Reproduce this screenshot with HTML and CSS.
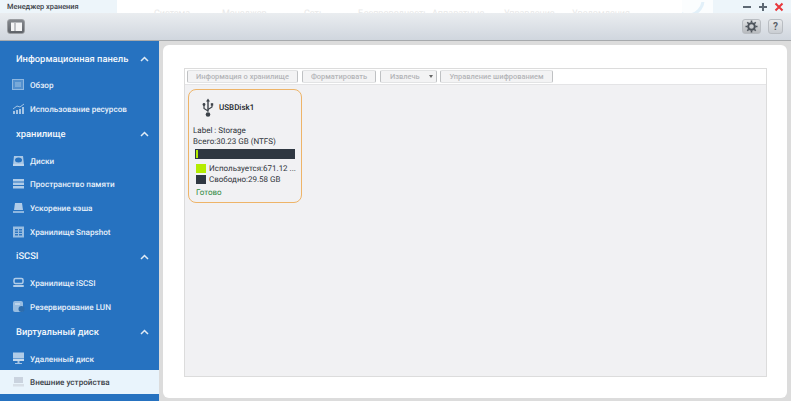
FILE: index.html
```html
<!DOCTYPE html>
<html lang="ru">
<head>
<meta charset="utf-8">
<title>Менеджер хранения</title>
<link rel="stylesheet" href="styles.css">
</head>
<body>
<div class="app">
  <header class="titlebar">
    <div class="title">Менеджер хранения</div>
    <div class="desk">
      <span class="l1">Система</span><span class="l2">Менеджер</span><span class="l3">Сеть</span><span class="l4">Беспроводность</span><span class="l5">Аппаратные</span><span class="l6">Управление</span><span class="l7">Уведомления</span>
    </div>
    <div class="ring"><svg width="31" height="13" viewBox="0 0 31 13"><circle cx="6" cy="-2" r="15" fill="none" stroke="#e2f0f9" stroke-width="3"/></svg></div>
    <div class="controls">
      <svg width="10" height="10" viewBox="0 0 10 10"><rect x="1" y="4" width="8" height="2" fill="#5d6873"/></svg>
      <svg width="10" height="10" viewBox="0 0 10 10"><path d="M1 4h3V1h2v3h3v2H6v3H4V6H1z" fill="#5d6873"/></svg>
      <svg width="10" height="10" viewBox="0 0 10 10"><path d="M1.5 1.5l7 7M8.5 1.500l-7 7" stroke="#e8383c" stroke-width="2"/></svg>
    </div>
  </header>
  <div class="toolbar">
    <button class="tb-toggle" type="button"><svg width="11" height="9" viewBox="0 0 11 9"><rect width="11" height="9" fill="#f4f5f6"/><rect width="11" height="1" fill="#b5b8bc"/><rect x="3.500" y="1" width="1" height="8" fill="#8a8e93"/></svg></button>
    <div class="tb-right">
      <button class="tb-btn gear" type="button"><svg width="13" height="13" viewBox="0 0 13 13"><circle cx="6.500" cy="6.500" r="3.300" fill="none" stroke="#4d535a" stroke-width="2"/><path d="M6.500 0.500v2M6.500 10.500v2M0.500 6.500h2M10.500 6.500h2M2.300 2.300l1.400 1.400M9.300 9.300l1.400 1.400M2.300 10.700l1.400-1.400M9.300 3.700l1.400-1.400" stroke="#4d535a" stroke-width="1.600"/></svg></button>
      <button class="tb-btn help" type="button">?</button>
    </div>
  </div>
  <div class="main">
    <nav class="sidebar">
      <div class="group-head"><span>Информационная панель</span><svg class="chev" width="9" height="6" viewBox="0 0 9 6"><path d="M1 5l3.500-3.500L8 5" fill="none" stroke="#dfeaf5" stroke-width="1.500"/></svg></div>
      <a class="item"><svg class="ico" width="14" height="12" viewBox="0 0 14 12"><rect x=".5" y=".5" width="11" height="10" fill="#5f98d2" stroke="#a9c9e8"/><rect x="3" y="3" width="6" height="5" fill="#8db7e0"/></svg><span>Обзор</span></a>
      <a class="item"><svg class="ico" width="14" height="12" viewBox="0 0 14 12"><path d="M1 11V8h2v3zM4 11V7h2v4zM7 11V6h2v5zM10 11V4h2v7z" fill="#c4d9ee"/><path d="M1 6l4-3 3 1 4-3" fill="none" stroke="#c4d9ee"/></svg><span>Использование ресурсов</span></a>

      <div class="group-head"><span>хранилище</span><svg class="chev" width="9" height="6" viewBox="0 0 9 6"><path d="M1 5l3.500-3.500L8 5" fill="none" stroke="#dfeaf5" stroke-width="1.500"/></svg></div>
      <a class="item"><svg class="ico" width="14" height="12" viewBox="0 0 14 12"><path d="M2 1h9l1 9H1z" fill="#c9ddf0"/><ellipse cx="6.500" cy="5" rx="3.500" ry="2.500" fill="#2672c0"/><rect x="1" y="9" width="11" height="2" fill="#e4eef8"/></svg><span>Диски</span></a>
      <a class="item"><svg class="ico" width="14" height="12" viewBox="0 0 14 12"><path d="M1 1h11v2.500H1zM1 4.500h11V7H1zM1 8h11v2.500H1z" fill="#d3e3f3"/></svg><span>Пространство памяти</span></a>
      <a class="item"><svg class="ico" width="14" height="12" viewBox="0 0 14 12"><path d="M3 1h7l1 7H2z" fill="#d3e3f3"/><rect x="1" y="9" width="11" height="2" fill="#a9c9e8"/></svg><span>Ускорение кэша</span></a>
      <a class="item"><svg class="ico" width="14" height="12" viewBox="0 0 14 12"><rect x="1" y="0.500" width="11" height="11" fill="#b5d0ea"/><path d="M3 3h3v1.500H3zM7 3h3v1.500H7zM3 5.500h3V7H3zM7 5.500h3V7H7zM3 8h3v1.500H3zM7 8h3v1.500H7z" fill="#2f77c2"/></svg><span>Хранилище Snapshot</span></a>

      <div class="group-head"><span>iSCSI</span><svg class="chev" width="9" height="6" viewBox="0 0 9 6"><path d="M1 5l3.500-3.500L8 5" fill="none" stroke="#dfeaf5" stroke-width="1.500"/></svg></div>
      <a class="item"><svg class="ico" width="14" height="12" viewBox="0 0 14 12"><rect x="2" y="1.500" width="9" height="5" rx="1.500" fill="none" stroke="#d3e3f3" stroke-width="1.500"/><rect x="1" y="8" width="11" height="2" rx="1" fill="#d3e3f3"/></svg><span>Хранилище iSCSI</span></a>
      <a class="item"><svg class="ico" width="14" height="14" viewBox="0 0 14 14"><rect x="1" y="1" width="10" height="11" rx="2" fill="#b5d0ea"/><circle cx="9.500" cy="9" r="3" fill="#2f6ba8"/><rect x="3" y="3" width="5" height="2" fill="#e4eef8"/></svg><span>Резервирование LUN</span></a>

      <div class="group-head"><span>Виртуальный диск</span><svg class="chev" width="9" height="6" viewBox="0 0 9 6"><path d="M1 5l3.500-3.500L8 5" fill="none" stroke="#dfeaf5" stroke-width="1.500"/></svg></div>
      <a class="item"><svg class="ico" width="14" height="13" viewBox="0 0 14 13"><rect x="1" y="0.500" width="11" height="6" fill="#d3e3f3"/><rect x="1" y="7" width="11" height="2" fill="#eef4fa"/><path d="M5.500 9h2v2h-2zM3 11h7v1H3z" fill="#c4d9ee"/></svg><span>Удаленный диск</span></a>
      <a class="item active"><svg class="ico" width="14" height="12" viewBox="0 0 14 12"><rect x="2" y="1" width="9" height="6" fill="#c3ccd8"/><rect x="1" y="8" width="11" height="2.500" fill="#d3dae3"/></svg><span>Внешние устройства</span></a>
    </nav>
    <section class="panel">
      <div class="box">
        <div class="actions">
          <button class="act a1" type="button">Информация о хранилище</button>
          <button class="act a2" type="button">Форматировать</button>
          <button class="act a3" type="button"><span>Извлечь</span><i class="caret"></i></button>
          <button class="act a4" type="button">Управление шифрованием</button>
        </div>
        <div class="content">
          <article class="card">
            <div class="card-head">
              <svg class="usb" width="12" height="20" viewBox="0 0 12 20"><path d="M6 0.500L8 3.500H6.700V13.500A1 1 0 0 1 5.300 13.500V3.500H4z" fill="#3c4249"/><path d="M6 13L2 10.500V7M6 11.500L10 9V7" fill="none" stroke="#3c4249" stroke-width="1.200"/><circle cx="2" cy="6.500" r="1.400" fill="#3c4249"/><rect x="8.800" y="5.200" width="2.400" height="2.400" fill="#3c4249"/><circle cx="6" cy="16.500" r="2.300" fill="#3c4249"/></svg>
              <strong>USBDisk1</strong>
            </div>
            <div class="line">Label : Storage</div>
            <div class="line">Всего:30.23 GB (NTFS)</div>
            <div class="bar"><div class="bar-used"></div></div>
            <div class="legend"><i class="sw lime"></i><span>Используется:671.12 ...</span></div>
            <div class="legend"><i class="sw dark"></i><span>Свободно:29.58 GB</span></div>
            <div class="status">Готово</div>
          </article>
        </div>
      </div>
    </section>
  </div>
</div>
</body>
</html>
```
FILE: styles.css
```css
* { box-sizing: border-box; }
html, body { margin: 0; padding: 0; }
body { width: 791px; height: 401px; overflow: hidden; font-family: Roboto, "Liberation Sans", sans-serif; color: #333; text-rendering: geometricPrecision; }
.app { width: 791px; height: 401px; display: flex; flex-direction: column; overflow: hidden; }

.titlebar { height: 13px; display: flex; background: #edf5fa; flex: none; overflow: hidden; }
.title { width: 117px; padding: 2px 0 0 7px; font-size: 7.400px; line-height: 10px; font-weight: 500; color: #3b4148; white-space: nowrap; }
.desk { width: 565px; background: #fff; display: flex; font-size: 9px; color: #e8e8e8; padding: 9px 0 0 37px; line-height: 10px; white-space: nowrap; }
.l1 { width: 68px; } .l2 { width: 82px; } .l3 { width: 54px; } .l4 { width: 74px; } .l5 { width: 72px; } .l6 { width: 68px; }
.ring { width: 31px; background: #fbfdfe; }
.controls { flex: 1; display: flex; gap: 6px; padding: 0 0 0 29px; align-items: center; }
.controls svg { flex: none; }

.toolbar { height: 28px; flex: none; display: flex; justify-content: space-between; align-items: center; padding: 0 8px 0 7px; background: linear-gradient(#eaedf0, #d0d6de); border-bottom: 1px solid #a7aaad; }
.tb-toggle { width: 18px; height: 15px; padding: 0; border: 1px solid #9a9da1; border-radius: 3px; background: linear-gradient(#85898e, #5f6369); display: flex; align-items: center; justify-content: center; }
.tb-right { display: flex; gap: 7px; }
.tb-btn { width: 19px; height: 15px; padding: 0; border: 1px solid #b9bdc2; border-radius: 3px; background: linear-gradient(#e8eaec, #c9cdd2); display: flex; align-items: center; justify-content: center; }
.gear { background: linear-gradient(#dfe1e3, #b7babe); }
.help { width: 15px; font: 700 10px/13px Roboto, sans-serif; color: #5a6068; }

.main { flex: 1; min-height: 0; display: flex; background: #dcdcdc; }
.sidebar { width: 159px; flex: none; background: #2672c0; padding-top: 4px; }
.group-head { height: 28px; display: flex; align-items: center; justify-content: space-between; padding: 0 10px 0 16px; font-size: 9.400px; font-weight: 500; color: #f2f7fc; white-space: nowrap; }
.chev { flex: none; }
.item { height: 23.670px; display: flex; align-items: center; padding: 1px 0 0 12px; font-size: 8.150px; font-weight: 500; color: #e6f0fa; white-space: nowrap; }
.ico { flex: none; margin-right: 4px; opacity: .8; }
.item.active { background: #e9f4fc; color: #3c4249; }

.panel { width: 624px; height: 353px; margin: 4px 0 0 4px; background: #fff; border-radius: 6px; padding: 23px 20px 21px 21px; }
.box { height: 100%; border: 1px solid #dcdcdc; display: flex; flex-direction: column; }
.actions { height: 15px; flex: none; display: flex; padding: 1px 0 0 2px; background: #fff; }
.act { height: 13px; padding: 0; margin-right: 4px; border: 1px solid #e2e3e4; border-left-color: #bfc1c3; border-right-color: #bfc1c3; border-radius: 2px; background: #f3f3f4; font: 500 7.450px/11px Roboto, sans-serif; color: #b3b5b8; white-space: nowrap; display: flex; align-items: center; justify-content: center; }
.a1 { width: 111px; } .a2 { width: 74px; } .a3 { width: 57px; margin-right: 3px; justify-content: flex-start; padding-left: 9px; } .a4 { width: 113px; }
.caret { width: 0; height: 0; border: 2.500px solid transparent; border-top: 3px solid #666; border-bottom: 0; margin-left: 9px; }

.content { flex: 1; background: #f1f1f3; border-top: 1px solid #e4e4e6; padding: 4px 0 0 3px; }
.card { width: 114px; height: 114px; border: 1px solid #eeb468; border-radius: 8px; padding: 0 0 0 4px; font-size: 8px; line-height: 10px; color: #2f343a; }
.card-head { height: 29px; display: flex; align-items: center; padding: 6px 0 0 9px; gap: 5px; margin-bottom: 6px; }
.card-head strong { font-size: 8px; font-weight: 500; color: #23272b; }
.line { height: 11px; line-height: 11px; white-space: nowrap; }
.bar { width: 100px; height: 10px; margin: 2px 0 4px 2px; padding: 1px; background: #2f3741; }
.bar-used { width: 2px; height: 100%; background: #b4ec00; }
.legend { height: 11px; display: flex; align-items: center; margin-left: 3px; gap: 3px; white-space: nowrap; }
.sw { width: 10px; height: 9px; flex: none; }
.lime { background: #b4ec00; }
.dark { background: #2f3741; }
.status { margin: 3px 0 0 3px; color: #2e8a3e; }
```
